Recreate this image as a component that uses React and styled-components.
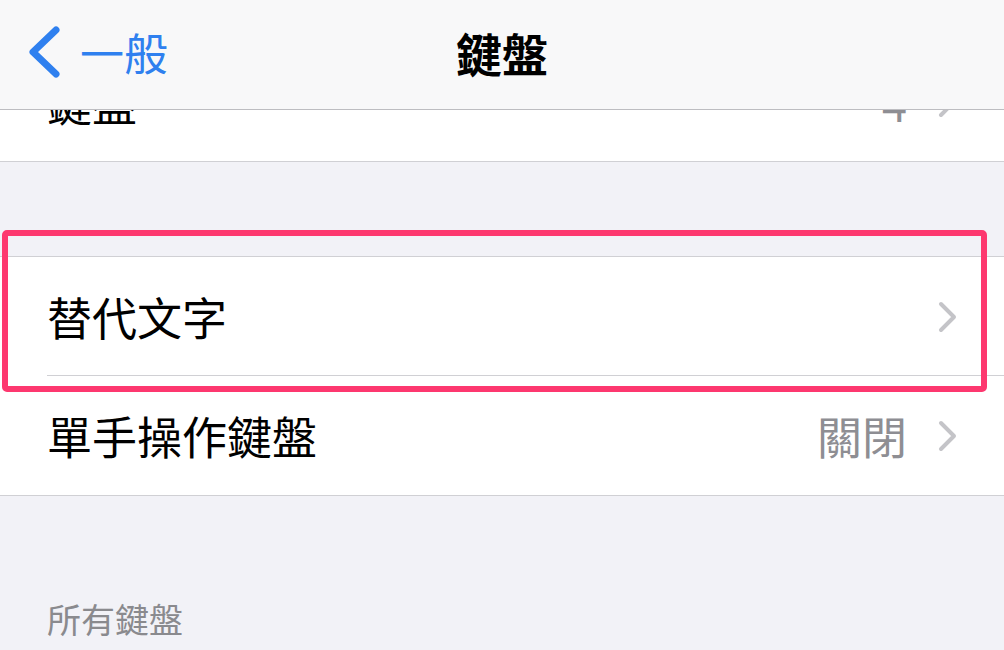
import React from 'react'
import styled, { createGlobalStyle } from 'styled-components'

const GlobalStyle = createGlobalStyle`
  html, body {
    margin: 0;
    padding: 0;
    background: #f2f2f7;
  }
  body {
    font-family: "Noto Sans CJK TC", "Noto Sans", sans-serif;
  }
`

const Screen = styled.div`
  position: relative;
  width: 1004px;
  height: 650px;
  overflow: hidden;
  background: #f2f2f7;
  display: flex;
  flex-direction: column;
`

const NavBar = styled.div`
  flex: 0 0 110px;
  box-sizing: border-box;
  background: #f8f8f9;
  border-bottom: 1.5px solid #bdbdc1;
  display: grid;
  grid-template-columns: 1fr auto 1fr;
  align-items: center;
  padding: 0 27px 6px;
`

const BackButton = styled.div`
  display: flex;
  align-items: center;
  gap: 19px;
  color: #2f80ef;
  font-size: 44px;
  line-height: 1;
`

const NavTitle = styled.div`
  font-size: 46px;
  font-weight: 700;
  line-height: 1;
  color: #000;
`

const ScrollView = styled.div`
  flex: 1;
  overflow: hidden;
`

/* scrolled: first row sits partly under the nav bar */
const Content = styled.div`
  margin-top: -67px;
`

const Group = styled.div`
  background: #fff;
  border-top: ${p => (p.$top ? '1px solid #d0d0d4' : 'none')};
  border-bottom: 1.5px solid #d0d0d4;
  margin-top: ${p => p.$gap || 0}px;
`

const Row = styled.div`
  position: relative;
  height: ${p => p.$h || 119}px;
  display: flex;
  align-items: center;
  padding: 0 46px 0 47px;
  font-size: 45px;
  line-height: 1;
  color: #000;

  &::after {
    content: '';
    display: ${p => (p.$sep ? 'block' : 'none')};
    position: absolute;
    left: 47px;
    right: 0;
    bottom: 0;
    height: 1px;
    background: #d0d0d4;
  }
`

const Label = styled.span`
  flex: 1;
`

const Value = styled.span`
  color: #8e8e93;
  margin-right: 31px;
`

const SectionHeader = styled.div`
  padding: 106px 47px 0;
  font-size: 34px;
  line-height: 1;
  color: #8a8a8e;
`

const Highlight = styled.div`
  position: absolute;
  left: 2px;
  top: 230px;
  width: 985px;
  height: 162px;
  box-sizing: border-box;
  border: 6px solid #fd386f;
  border-radius: 5px;
  z-index: 3;
`

const Chevron = () => (
  <svg width="20" height="32" viewBox="0 0 20 32">
    <path d="M3 3 L16 16 L3 29" fill="none" stroke="#c4c4c8" strokeWidth="4" strokeLinecap="round" strokeLinejoin="round" />
  </svg>
)

const BackChevron = () => (
  <svg width="34" height="52" viewBox="0 0 34 52">
    <path d="M29 4 L6 26 L29 48" fill="none" stroke="#2f80ef" strokeWidth="7" strokeLinecap="round" strokeLinejoin="round" />
  </svg>
)

export default function App() {
  return (
    <Screen>
      <GlobalStyle />
      <NavBar>
        <BackButton>
          <BackChevron />
          <span>一般</span>
        </BackButton>
        <NavTitle>鍵盤</NavTitle>
        <div />
      </NavBar>
      <ScrollView>
        <Content>
          <Group>
            <Row $h={118}>
              <Label>鍵盤</Label>
              <Value>4</Value>
              <Chevron />
            </Row>
          </Group>
          <Group $top $gap={94}>
            <Row $sep>
              <Label>替代文字</Label>
              <Chevron />
            </Row>
            <Row>
              <Label>單手操作鍵盤</Label>
              <Value>關閉</Value>
              <Chevron />
            </Row>
          </Group>
          <SectionHeader>所有鍵盤</SectionHeader>
        </Content>
      </ScrollView>
      <Highlight />
    </Screen>
  )
}
